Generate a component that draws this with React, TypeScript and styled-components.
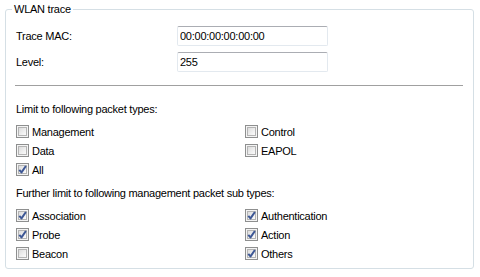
import React from 'react';
import styled, { createGlobalStyle } from 'styled-components';

const GlobalStyle = createGlobalStyle`
  html, body {
    margin: 0;
    padding: 0;
    background: #ffffff;
  }
  body {
    font-family: "Liberation Sans", Arial, sans-serif;
    font-size: 11px;
    color: #000000;
  }
`;

const Page = styled.div`
  width: 480px;
  height: 277px;
  padding: 3px 6px 0 5px;
  box-sizing: border-box;
`;

const GroupBox = styled.fieldset`
  margin: 0;
  padding: 0;
  height: 266px;
  box-sizing: border-box;
  border: 1px solid #d5dfe5;
  border-radius: 3px;
  min-width: 0;
`;

const Legend = styled.legend`
  margin-left: 6px;
  padding: 0 2px;
  line-height: 13px;
  letter-spacing: -0.25px;
`;

const Body = styled.div`
  padding: 10px 10px 0 10px;
  display: flex;
  flex-direction: column;
`;

const FormGrid = styled.div`
  display: grid;
  grid-template-columns: 161px 151px;
  row-gap: 6px;
  align-items: center;
`;

const FieldLabel = styled.label`
  letter-spacing: -0.25px;
`;

const TextBox = styled.input`
  box-sizing: border-box;
  width: 151px;
  height: 20px;
  margin: 0;
  padding: 0 2px;
  font-family: "Liberation Sans", Arial, sans-serif;
  font-size: 11px;
  letter-spacing: -0.25px;
  color: #000000;
  background: #ffffff;
  border: 1px solid #e3e9ef;
  border-top-color: #abadb3;
  border-radius: 2px;
  outline: none;
`;

const Separator = styled.hr`
  margin: 13px 0 0 -1px;
  border: none;
  border-top: 1px solid #a0a0a0;
  height: 0;
`;

const SectionTitle = styled.div<{ $top: number }>`
  margin-top: ${p => p.$top}px;
  line-height: 13px;
  letter-spacing: -0.25px;
`;

const CheckGrid = styled.div`
  display: grid;
  grid-template-columns: 229px 1fr;
  grid-auto-rows: 19px;
  margin-top: 6px;
`;

const CheckRow = styled.label`
  display: flex;
  align-items: center;
  gap: 3px;
  letter-spacing: -0.25px;
`;

const Box = styled.span`
  position: relative;
  width: 13px;
  height: 13px;
  box-sizing: border-box;
  border: 1px solid #8e8f8f;
  background: #f4f4f4;
  flex: none;

  &::before {
    content: '';
    position: absolute;
    inset: 1px;
    border: 1px solid #b4b4b4;
    background: linear-gradient(135deg, #dcdcdc 0%, #eeeeee 55%, #fbfbfb 100%);
  }
`;

const Tick = styled.svg`
  position: absolute;
  left: 1px;
  top: 1px;
  width: 9px;
  height: 9px;
`;

interface CheckProps {
  label: string;
  checked?: boolean;
}

const Check: React.FC<CheckProps> = ({ label, checked = false }) => (
  <CheckRow>
    <Box>
      {checked && (
        <Tick viewBox="0 0 9 9">
          <path d="M1.3 4.8 L3.5 7.4 L7.9 1" fill="none" stroke="#3d5795" strokeWidth="2" strokeLinejoin="round" />
        </Tick>
      )}
    </Box>
    <span>{label}</span>
  </CheckRow>
);

export default function App() {
  return (
    <Page>
      <GlobalStyle />
      <GroupBox>
        <Legend>WLAN trace</Legend>
        <Body>
          <FormGrid>
            <FieldLabel>Trace MAC:</FieldLabel>
            <TextBox defaultValue="00:00:00:00:00:00" />
            <FieldLabel>Level:</FieldLabel>
            <TextBox defaultValue="255" />
          </FormGrid>
          <Separator />
          <SectionTitle $top={17}>Limit to following packet types:</SectionTitle>
          <CheckGrid>
            <Check label="Management" />
            <Check label="Control" />
            <Check label="Data" />
            <Check label="EAPOL" />
            <Check label="All" checked />
          </CheckGrid>
          <SectionTitle $top={8}>Further limit to following management packet sub types:</SectionTitle>
          <CheckGrid>
            <Check label="Association" checked />
            <Check label="Authentication" checked />
            <Check label="Probe" checked />
            <Check label="Action" checked />
            <Check label="Beacon" />
            <Check label="Others" checked />
          </CheckGrid>
        </Body>
      </GroupBox>
    </Page>
  );
}
